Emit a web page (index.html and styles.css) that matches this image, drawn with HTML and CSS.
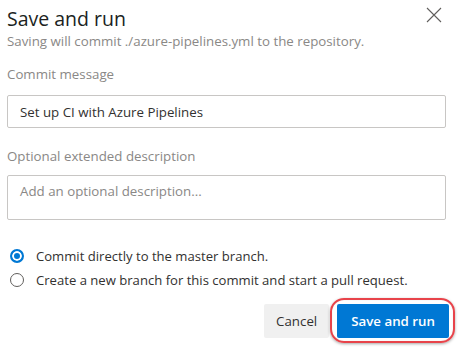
FILE: index.html
```html
<!DOCTYPE html>
<html lang="en">
<head>
  <meta charset="UTF-8" />
  <title>Save and run</title>
  <link rel="stylesheet" href="styles.css">
</head>
<body>
  <div class="dialog">
    <div class="dialog-header">
      <div class="titles">
        <h1>Save and run</h1>
        <div class="subtitle">Saving will commit ./azure-pipelines.yml to the repository.</div>
      </div>
      <button class="close" aria-label="Close">
        <svg width="16" height="16" viewBox="0 0 16 16">
          <path d="M1 1 L15 15 M15 1 L1 15" stroke="#605e5c" stroke-width="1.1" fill="none" />
        </svg>
      </button>
    </div>

    <label class="field-label" for="message">Commit message</label>
    <input class="text-input" id="message" type="text" value="Set up CI with Azure Pipelines" />

    <label class="field-label second" for="description">Optional extended description</label>
    <textarea class="text-area" id="description" placeholder="Add an optional description..."></textarea>

    <div class="choices">
      <label class="choice">
        <span class="radio checked"></span>
        Commit directly to the master branch.
      </label>
      <label class="choice">
        <span class="radio"></span>
        Create a new branch for this commit and start a pull request.
      </label>
    </div>

    <div class="actions">
      <button class="btn btn-default">Cancel</button>
      <button class="btn btn-primary">Save and run</button>
    </div>
  </div>
</body>
</html>
```

FILE: styles.css
```css
body {
  margin: 0;
  background: #fff;
  font-family: 'Open Sans', 'Noto Sans', Arial, sans-serif;
  color: #323130;
}
.dialog {
  width: 458px;
  height: 349px;
  box-sizing: border-box;
  padding: 6px 12px 0 7px;
}
.dialog-header {
  display: flex;
  justify-content: space-between;
  align-items: flex-start;
}
h1 {
  margin: 0;
  font-size: 19.5px;
  font-weight: 400;
  line-height: 26px;
  color: #201f1e;
}
.subtitle {
  font-size: 13.3px;
  line-height: 17px;
  color: #8a8886;
  margin-top: 1px;
}
.close {
  border: none;
  background: none;
  padding: 0;
  margin: 1px 4px 0 0;
  width: 16px;
  height: 16px;
  cursor: pointer;
}
.field-label {
  display: block;
  margin-top: 16px;
  font-size: 13.3px;
  line-height: 17px;
  color: #8a8886;
}
.field-label.second {
  margin-top: 20px;
}
.text-input,
.text-area {
  display: block;
  box-sizing: border-box;
  width: 439px;
  border: 1px solid #c8c6c4;
  border-radius: 2px;
  font-family: inherit;
  font-size: 13.3px;
  color: #323130;
  outline: none;
}
.text-input {
  height: 33px;
  margin-top: 12px;
  padding: 0 12px;
}
.text-area {
  height: 45px;
  margin-top: 10px;
  padding: 6px 12px;
  resize: none;
}
.text-area::placeholder {
  color: #8a8886;
}
.choices {
  margin-top: 27px;
  display: flex;
  flex-direction: column;
  gap: 6px;
}
.choice {
  display: flex;
  align-items: center;
  gap: 12px;
  padding-left: 3px;
  font-size: 13.1px;
  line-height: 18px;
  color: #323130;
}
.radio {
  width: 14px;
  height: 14px;
  box-sizing: border-box;
  border: 1px solid #605e5c;
  border-radius: 50%;
  flex: none;
}
.radio.checked {
  border: 2px solid #0078d4;
  background: #0078d4;
  box-shadow: inset 0 0 0 2px #fff;
}
.actions {
  display: flex;
  justify-content: flex-end;
  gap: 8px;
  margin-top: 15px;
}
.btn {
  height: 34px;
  border: none;
  border-radius: 2px;
  font-family: inherit;
  font-size: 13.3px;
  padding: 0 12px;
  cursor: pointer;
}
.btn-default {
  background: #f0f0f0;
  color: #323130;
}
.btn-primary {
  position: relative;
  background: #0078d4;
  color: #fff;
  font-weight: 600;
  padding: 0 14px;
  margin-right: -3px;
}
.btn-primary::after {
  content: "";
  position: absolute;
  left: -7px;
  right: -6px;
  top: -6px;
  bottom: -5px;
  border: 2.5px solid #e8434a;
  border-radius: 14px;
  box-shadow: 0 1px 3px rgba(0,0,0,0.35), inset 0 0 1px rgba(0,0,0,0.2);
}
```
